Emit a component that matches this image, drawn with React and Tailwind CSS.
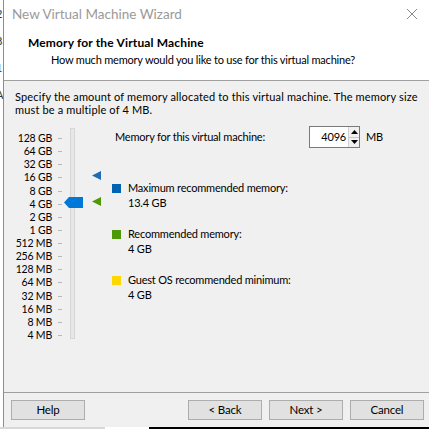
import React from "react";

const sizes = ["128 GB", "64 GB", "32 GB", "16 GB", "8 GB", "4 GB", "2 GB", "1 GB", "512 MB", "256 MB", "128 MB", "64 MB", "32 MB", "16 MB", "8 MB", "4 MB"];

const font = { fontFamily: 'Lato, "Noto Sans", sans-serif' };

function Btn({ children }) {
  return (
    <button className="w-[74px] h-[20px] bg-[#e1e1e1] border border-[#adadad] text-[11.5px] leading-none text-black">
      {children}
    </button>
  );
}

function Legend({ color, label, value }) {
  return (
    <div className="flex gap-[7px]">
      <div className={`w-[9px] h-[9px] mt-[4px] ${color}`} />
      <div className="leading-[15px]">
        <p>{label}</p>
        <p>{value}</p>
      </div>
    </div>
  );
}

export default function App() {
  return (
    <div className="w-[429px] h-[429px] overflow-hidden bg-black text-[11px] tracking-[-0.2px] text-black" style={font}>
      <div className="flex h-[427px]">
        <div className="w-[3px] bg-white text-[11px] leading-[27px] overflow-hidden text-[#333]">
          <p className="-ml-[4px]">2</p>
          <p className="-ml-[4px]">8</p>
          <p className="-ml-[4px]">1</p>
          <p className="-ml-[4px]">A</p>
        </div>
        <div className="flex-1 flex flex-col border-l border-[#8c8c8c] bg-[#f0f0f0]">
          <div className="bg-white border-b border-[#a0a0a0] h-[81px] shrink-0">
            <div className="flex items-center justify-between h-[28px] pl-[8px] pr-[10px]">
              <span className="text-[13.5px] tracking-normal text-[#9a9a9a]">New Virtual Machine Wizard</span>
              <svg width="12" height="12" viewBox="0 0 12 12" className="mr-[1px]">
                <path d="M1 1L11 11M11 1L1 11" stroke="#8a8a8a" strokeWidth="1" />
              </svg>
            </div>
            <p className="pl-[24px] mt-[7px] text-[12px] tracking-[0.15px] font-bold leading-[16px]">Memory for the Virtual Machine</p>
            <p className="pl-[47px] mt-[1px] leading-[16px]">How much memory would you like to use for this virtual machine?</p>
          </div>

          <div className="flex-1 flex flex-col">
            <p className="pl-[11px] pr-[2px] pt-[9px] leading-[13px] tracking-[0.15px] whitespace-nowrap">
              Specify the amount of memory allocated to this virtual machine. The memory size
              <br />
              must be a multiple of 4 MB.
            </p>

            <div className="flex mt-[12px]">
              <div className="w-[48px] flex flex-col items-end text-[10.5px] pt-[4px]">
                {sizes.map((s) => (
                  <span key={s} className="h-[13.13px] leading-[13.13px] whitespace-nowrap">{s}</span>
                ))}
              </div>
              <div className="w-[10px] flex flex-col items-end pt-[4px]">
                {sizes.map((s) => (
                  <div key={s} className="h-[13.13px] flex items-center">
                    <div className="w-[4px] h-px bg-[#b8b8b8]" />
                  </div>
                ))}
              </div>
              <div className="relative w-[48px] h-[212px]">
                <div className="absolute left-[8px] top-0 w-[5px] h-[211px] bg-[#e7e7e7] border border-[#d6d6d6]" />
                <svg className="absolute left-[2px] top-[69px]" width="19" height="11" viewBox="0 0 19 11">
                  <path d="M0 5.5L5 0H19V11H5Z" fill="#0078d7" />
                </svg>
                <svg className="absolute left-[30px] top-[43px]" width="9" height="9" viewBox="0 0 9 9">
                  <path d="M0 4.5L9 0V9Z" fill="#1e6bb8" />
                </svg>
                <svg className="absolute left-[30px] top-[69px]" width="9" height="9" viewBox="0 0 9 9">
                  <path d="M0 4.5L9 0V9Z" fill="#4e9a06" />
                </svg>
              </div>

              <div className="flex-1 flex flex-col pl-[2px]">
                <div className="flex items-center -mt-[2px] pl-[3px]">
                  <span className="w-[194px]">Memory for this virtual machine:</span>
                  <div className="flex h-[22px] border border-[#7a7a7a] bg-white">
                    <div className="w-[38px] text-right pr-[2px] leading-[20px]">4096</div>
                    <div className="w-[11px] flex flex-col border-l border-[#d0d0d0]">
                      <div className="flex-1 flex items-center justify-center bg-[#f0f0f0] border-b border-[#c8c8c8]">
                        <svg width="7" height="4" viewBox="0 0 7 4"><path d="M0 4L3.5 0L7 4Z" fill="#000" /></svg>
                      </div>
                      <div className="flex-1 flex items-center justify-center bg-[#f0f0f0]">
                        <svg width="7" height="4" viewBox="0 0 7 4"><path d="M0 0L3.5 4L7 0Z" fill="#000" /></svg>
                      </div>
                    </div>
                  </div>
                  <span className="ml-[6px]">MB</span>
                </div>

                <div className="mt-[32px] flex flex-col gap-[16px]">
                  <Legend color="bg-[#0063b1]" label="Maximum recommended memory:" value="13.4 GB" />
                  <Legend color="bg-[#4e9a06]" label="Recommended memory:" value="4 GB" />
                  <Legend color="bg-[#ffd700]" label="Guest OS recommended minimum:" value="4 GB" />
                </div>
              </div>
            </div>

            <div className="flex-1" />
            <div className="border-t border-[#a0a0a0] h-[35px] flex items-center pl-[7px] pr-[5px]">
              <Btn>Help</Btn>
              <div className="flex-1" />
              <div className="flex gap-[7px]">
                <Btn>&lt; Back</Btn>
                <Btn>Next &gt;</Btn>
                <Btn>Cancel</Btn>
              </div>
            </div>
          </div>
        </div>
      </div>
      <div className="flex h-[2px]">
        <div className="w-[105px] bg-[#d8d8d8]" />
        <div className="w-[44px] bg-white" />
        <div className="flex-1 bg-black" />
      </div>
    </div>
  );
}
